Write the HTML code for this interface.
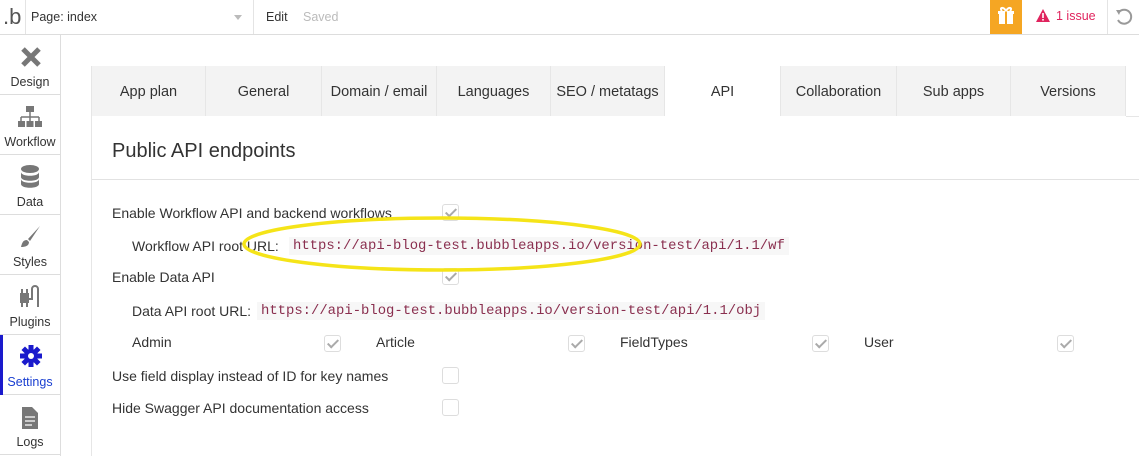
<!DOCTYPE html>
<html><head><style>
*{box-sizing:border-box;margin:0;padding:0}
body{width:1139px;height:456px;overflow:hidden;background:#fff;font-family:"Liberation Sans",sans-serif;color:#333;position:relative;font-size:14px}
.a{position:absolute}
.top{left:0;top:0;width:1139px;height:35px;border-bottom:1px solid #ddd}
.side{left:0;top:35px;width:61px;height:421px;border-right:1px solid #ddd}
.si{position:absolute;left:0;width:60px;height:60px;border-bottom:1px solid #ddd;text-align:center;font-size:12.5px;color:#333}
.si span{position:absolute;left:0;right:0;top:40px}
.tab{position:absolute;top:66px;height:50px;background:#f3f3f3;border-right:1px solid #e6e6e6;text-align:center;line-height:52px;font-size:14.5px;color:#333}
.lbl{position:absolute;font-size:14px;color:#333}
.url{position:absolute;font-family:"Liberation Mono",monospace;font-size:13.9px;color:#8a2f4f;background:#f7f7f7;padding:1px 4px}
.cb{position:absolute;width:17px;height:17px;border:1px solid #ddd;border-radius:3px;background:#fff}
.ck::after{content:"";position:absolute;left:5px;top:1px;width:4px;height:9px;border:solid #aaa;border-width:0 2px 2px 0;transform:rotate(45deg)}
</style></head><body>
<div class="a top"></div>
<div class="a" style="left:3px;top:5px;font-size:22px;color:#555;line-height:24px">.b</div>
<div class="a" style="left:25px;top:0;width:1px;height:34px;background:#e4e4e4"></div>
<div class="a" style="left:31px;top:10px;font-size:12.5px;color:#333">Page: index</div>
<div class="a" style="left:234px;top:15px;border:4px solid transparent;border-top:5px solid #bbb"></div>
<div class="a" style="left:253px;top:0;width:1px;height:34px;background:#e4e4e4"></div>
<div class="a" style="left:266px;top:10px;font-size:12.5px">Edit</div>
<div class="a" style="left:303px;top:10px;font-size:12.5px;color:#bbb">Saved</div>
<div class="a" style="left:990px;top:0;width:32px;height:34px;background:#f5a623"></div>
<svg class="a" style="left:996px;top:6px" width="20" height="20" viewBox="0 0 20 20"><rect x="3" y="8" width="14" height="10" fill="#fff"/><rect x="2" y="5" width="16" height="3" fill="#fff"/><rect x="9" y="5" width="2" height="13" fill="#f5a623"/><path d="M10 5C7 0 3 2 6 5M10 5c3-5 7-3 4 0" stroke="#fff" stroke-width="2" fill="none"/></svg>
<svg class="a" style="left:1036px;top:9px" width="14" height="13" viewBox="0 0 14 13"><path d="M7 0L14 13H0Z" fill="#e0245e"/><rect x="6.2" y="4" width="1.6" height="5" fill="#fff"/><rect x="6.2" y="10" width="1.6" height="1.6" fill="#fff"/></svg>
<div class="a" style="left:1056px;top:9px;font-size:12.5px;color:#e0245e">1 issue</div>
<div class="a" style="left:1107px;top:0;width:1px;height:34px;background:#e4e4e4"></div>
<svg class="a" style="left:1114px;top:7px" width="20" height="20" viewBox="0 0 20 20"><path d="M5 5A7 7 0 1 1 4 13" stroke="#999" stroke-width="2" fill="none"/><path d="M2 3L7 3L5 8Z" fill="#999"/></svg>

<div class="a side"></div>
<div class="si" style="top:35px"><svg style="position:absolute;left:20px;top:11px" width="22" height="22" viewBox="0 0 22 22"><path d="M3 3L19 19M19 3L3 19" stroke="#777" stroke-width="5"/></svg><span>Design</span></div>
<div class="si" style="top:95px"><svg style="position:absolute;left:18px;top:10px" width="24" height="24" viewBox="0 0 24 24"><rect x="8" y="1" width="8" height="6" fill="#777"/><path d="M12 7v5M3 12h18M3 12v4M12 12v4M21 12v4" stroke="#777" stroke-width="1.5" fill="none"/><rect x="0" y="16" width="7" height="6" fill="#777"/><rect x="8.5" y="16" width="7" height="6" fill="#777"/><rect x="17" y="16" width="7" height="6" fill="#777"/></svg><span>Workflow</span></div>
<div class="si" style="top:155px"><svg style="position:absolute;left:21px;top:10px" width="18" height="24" viewBox="0 0 18 24"><ellipse cx="9" cy="4" rx="9" ry="4" fill="#777"/><path d="M0 7c0 5 18 5 18 0v5c0 5-18 5-18 0zM0 14c0 5 18 5 18 0v5c0 5-18 5-18 0z" fill="#777"/></svg><span>Data</span></div>
<div class="si" style="top:215px"><svg style="position:absolute;left:18px;top:10px" width="24" height="24" viewBox="0 0 24 24"><path d="M22 1L10 14l2 2z" fill="#777"/><path d="M9 15c-4 0-5 3-6 7 4 0 8-1 8-5z" fill="#777"/></svg><span>Styles</span></div>
<div class="si" style="top:275px"><svg style="position:absolute;left:19px;top:10px" width="24" height="24" viewBox="0 0 24 24"><rect x="1" y="8" width="9" height="10" fill="#777"/><path d="M3 18v4M8 18v4M3 8V4M8 8V4" stroke="#777" stroke-width="2"/><path d="M10 14h3V4a3 3 0 0 1 6 0v18" stroke="#777" stroke-width="2" fill="none"/></svg><span>Plugins</span></div>
<div class="si" style="top:335px;color:#1a3fd1"><div style="position:absolute;left:0;top:0;width:3px;height:60px;background:#1a1acc"></div><svg style="position:absolute;left:20px;top:10px" width="22" height="22" viewBox="0 0 22 22"><g fill="#1a1acc"><circle cx="11" cy="11" r="7"/><rect x="8.5" y="0" width="5" height="22"/><rect x="0" y="8.5" width="22" height="5"/><rect x="8.5" y="0" width="5" height="22" transform="rotate(45 11 11)"/><rect x="8.5" y="0" width="5" height="22" transform="rotate(-45 11 11)"/></g><circle cx="11" cy="11" r="3" fill="#fff"/></svg><span>Settings</span></div>
<div class="si" style="top:395px"><svg style="position:absolute;left:22px;top:12px" width="16" height="22" viewBox="0 0 16 22"><path d="M0 0h10l6 6v16H0z" fill="#777"/><path d="M3 10h10M3 14h10M3 18h7" stroke="#fff" stroke-width="1.3"/></svg><span>Logs</span></div>

<div class="a" style="left:91px;top:66px;width:1px;height:390px;background:#e6e6e6"></div>
<div class="a" style="left:92px;top:66px;width:1034px;height:1px;background:#e6e6e6"></div>
<div class="tab" style="left:92px;width:114px">App plan</div>
<div class="tab" style="left:206px;width:116px">General</div>
<div class="tab" style="left:322px;width:115px">Domain / email</div>
<div class="tab" style="left:437px;width:114px">Languages</div>
<div class="tab" style="left:551px;width:114px">SEO / metatags</div>
<div class="tab" style="left:665px;width:116px;background:#fff">API</div>
<div class="tab" style="left:781px;width:116px">Collaboration</div>
<div class="tab" style="left:897px;width:114px">Sub apps</div>
<div class="tab" style="left:1011px;width:115px">Versions</div>
<div class="a" style="left:1126px;top:116px;width:13px;height:1px;background:#e6e6e6"></div>

<div class="a" style="left:112px;top:140px;font-size:20px;color:#333">Public API endpoints</div>
<div class="a" style="left:92px;top:179px;width:1047px;height:1px;background:#e2e2e2"></div>

<div class="lbl" style="left:112px;top:205px">Enable Workflow API and backend workflows</div>
<div class="cb ck" style="left:442px;top:204px"></div>
<div class="lbl" style="left:132px;top:238px">Workflow API root URL:</div>
<div class="url" style="left:289px;top:237px">https://api-blog-test.bubbleapps.io/version-test/api/1.1/wf</div>
<div class="lbl" style="left:112px;top:269px">Enable Data API</div>
<div class="cb ck" style="left:442px;top:268px"></div>
<div class="lbl" style="left:132px;top:303px">Data API root URL:</div>
<div class="url" style="left:257px;top:302px">https://api-blog-test.bubbleapps.io/version-test/api/1.1/obj</div>
<div class="lbl" style="left:132px;top:334px">Admin</div><div class="cb ck" style="left:324px;top:335px"></div>
<div class="lbl" style="left:376px;top:334px">Article</div><div class="cb ck" style="left:568px;top:335px"></div>
<div class="lbl" style="left:620px;top:334px">FieldTypes</div><div class="cb ck" style="left:812px;top:335px"></div>
<div class="lbl" style="left:864px;top:334px">User</div><div class="cb ck" style="left:1057px;top:335px"></div>
<div class="lbl" style="left:112px;top:368px">Use field display instead of ID for key names</div>
<div class="cb" style="left:442px;top:367px"></div>
<div class="lbl" style="left:112px;top:400px">Hide Swagger API documentation access</div>
<div class="cb" style="left:442px;top:399px"></div>

<svg class="a" style="left:240px;top:213px" width="410" height="62"><ellipse cx="202" cy="31" rx="198" ry="26" fill="none" stroke="#f5e418" stroke-width="3.5"/></svg>
</body></html>
